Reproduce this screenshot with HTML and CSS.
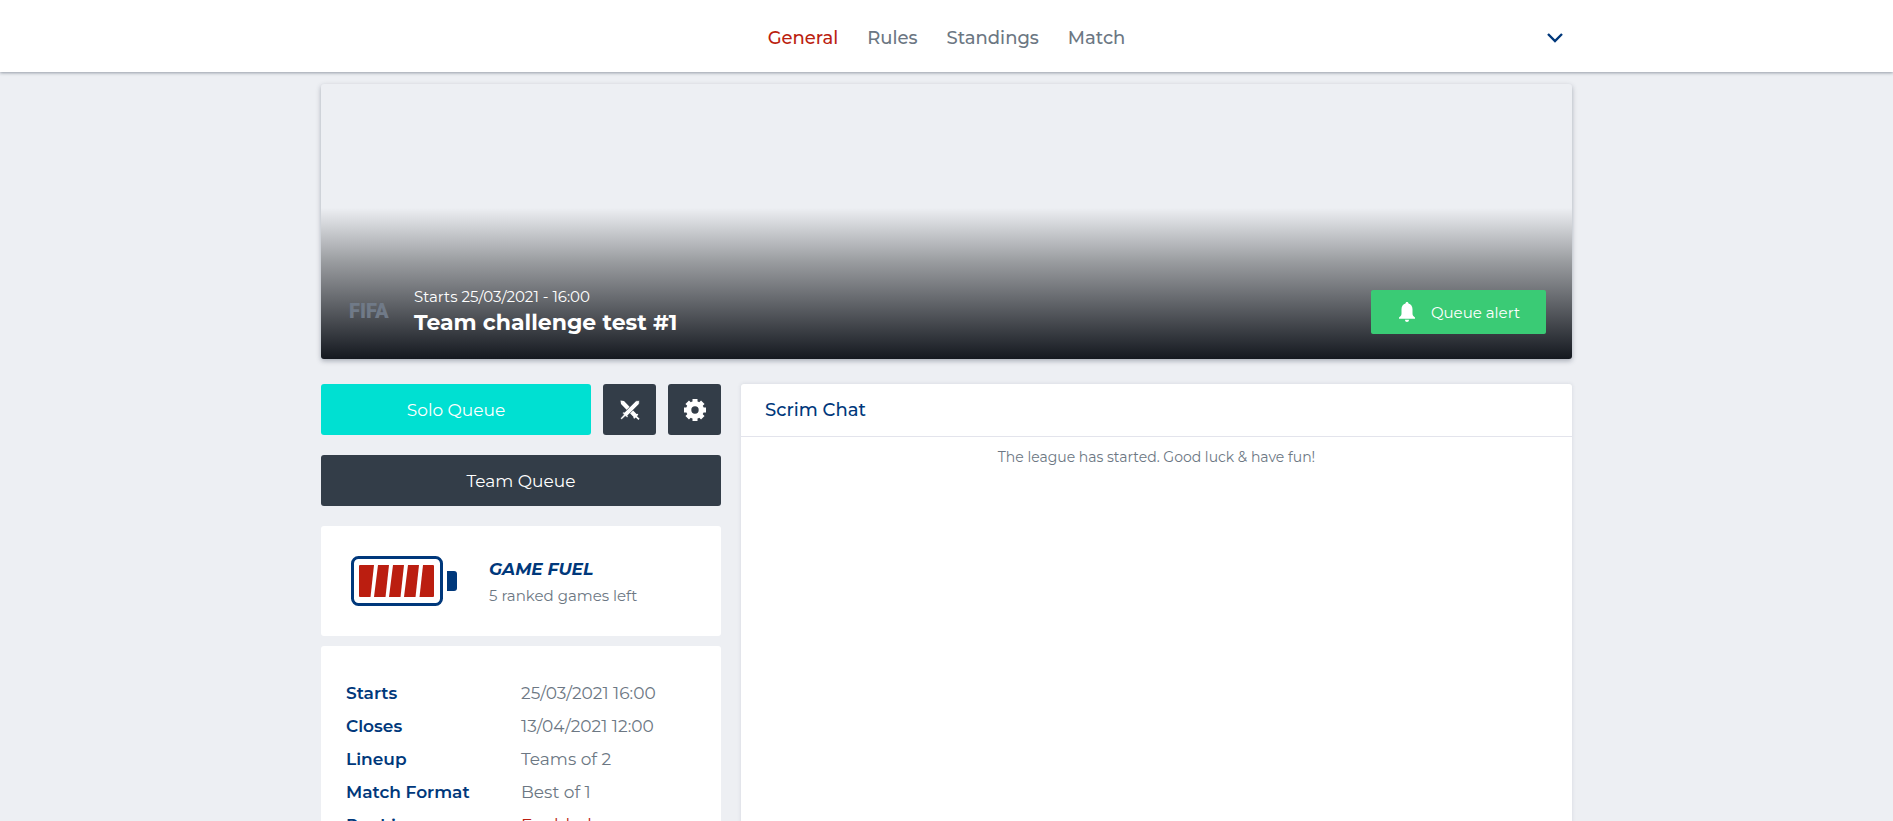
FILE: index.html
```html
<!DOCTYPE html>
<html lang="en">
<head>
<meta charset="utf-8">
<meta name="viewport" content="width=device-width, initial-scale=1">
<title>Team challenge test #1</title>
<link rel="stylesheet" href="styles.css">
</head>
<body>
<header class="topbar">
  <div class="container topbar-inner">
    <nav class="nav" aria-label="League">
      <a class="nav-link nav-link-active" href="#general">General</a>
      <a class="nav-link" href="#rules">Rules</a>
      <a class="nav-link" href="#standings">Standings</a>
      <a class="nav-link" href="#match">Match</a>
    </nav>
    <button class="menu-toggle" type="button" aria-label="Open menu">
      <svg width="16" height="10" viewBox="0 0 16 10" aria-hidden="true"><path d="M1 1 8 8l7-7" fill="none" stroke="currentColor" stroke-width="2.400"/></svg>
    </button>
  </div>
</header>

<main class="container">
  <section class="banner">
    <div class="banner-info">
      <span class="game-logo">FIFA</span>
      <div class="banner-text">
        <p class="banner-date">Starts 25/03/2021 - 16:00</p>
        <h1 class="banner-title">Team challenge test #1</h1>
      </div>
      <button class="alert-button" type="button">
        <svg width="16" height="20" viewBox="0 0 16 20" fill="currentColor" aria-hidden="true"><path d="M8 0c.9 0 1.500.6 1.500 1.500 2.500.7 4 2.800 4 5.800v4.200c0 1.600.8 2.800 2.500 3.900v1.400H0v-1.400c1.700-1.100 2.500-2.300 2.500-3.900V7.300c0-3 1.500-5.100 4-5.800C6.500.6 7.100 0 8 0zM6 17.700h4C10 19 9.100 20 8 20s-2-1-2-2.300z"/></svg>
        Queue alert
      </button>
    </div>
  </section>

  <div class="columns">
    <aside class="side">
      <div class="queue-row">
        <button class="button button-solo" type="button">Solo Queue</button>
        <button class="button button-icon" type="button" aria-label="Challenge">
          <svg width="20" height="20" viewBox="0 0 20 20" aria-hidden="true">
            <path d="M.5.5 4 1 16.500 14l.9-.3.900.9-1.300 1.600 2.600 2.600-1.200 1.200-2.600-2.600-1.600 1.300-.9-.9.300-.9L1 4z" fill="currentColor"/>
            <path d="M19.500.5 16 .8 4.500 12.300l-1-.4-1 1 1.200 1.800L.4 18.200l1.400 1.400 3.500-3.300 1.800 1.200 1-1-.4-1L19.200 4z" fill="currentColor" stroke="#333d48" stroke-width=".7"/>
          </svg>
        </button>
        <button class="button button-icon" type="button" aria-label="Settings">
          <svg width="22" height="22" viewBox="0 0 22 22" aria-hidden="true">
            <circle cx="11" cy="11" r="6.300" fill="none" stroke="currentColor" stroke-width="5.200"/>
            <path d="M11 0v4M11 18v4M0 11h4M18 11h4M3.200 3.200 6 6M16 16l2.800 2.800M18.800 3.200 16 6M6 16l-2.800 2.800" stroke="currentColor" stroke-width="5"/>
          </svg>
        </button>
      </div>
      <button class="button button-team" type="button">Team Queue</button>

      <section class="card fuel">
        <svg width="106" height="50" viewBox="0 0 106 50" aria-hidden="true">
          <rect x="1.500" y="1.500" width="89" height="47" rx="6" fill="none" stroke="#00387b" stroke-width="3"/>
          <path d="M96 15h7a3 3 0 0 1 3 3v14a3 3 0 0 1-3 3h-7z" fill="#00387b"/>
          <g fill="#bb1e10">
            <path d="M9 9h14l-3.500 32H9a1 1 0 0 1-1-1V10a1 1 0 0 1 1-1z"/>
            <path d="M27 9h11l-3.500 32h-11.500z"/>
            <path d="M42 9h11l-3.500 32h-11.500z"/>
            <path d="M57 9h11l-3.500 32h-11.500z"/>
            <path d="M72 9h10a1 1 0 0 1 1 1v30a1 1 0 0 1-1 1H68.500z"/>
          </g>
        </svg>
        <div>
          <h2 class="fuel-title">GAME FUEL</h2>
          <p class="fuel-text">5 ranked games left</p>
        </div>
      </section>

      <dl class="card details">
        <dt>Starts</dt><dd>25/03/2021 16:00</dd>
        <dt>Closes</dt><dd>13/04/2021 12:00</dd>
        <dt>Lineup</dt><dd>Teams of 2</dd>
        <dt>Match Format</dt><dd>Best of 1</dd>
        <dt>Ranking</dt><dd class="enabled">Enabled</dd>
      </dl>
    </aside>

    <section class="card chat">
      <h2 class="chat-title">Scrim Chat</h2>
      <p class="chat-message">The league has started. Good luck &amp; have fun!</p>
    </section>
  </div>
</main>
</body>
</html>
```
FILE: styles.css
```css
* {
  box-sizing: border-box;
}

body {
  margin: 0;
  height: 100vh;
  overflow: hidden;
  background: #edeff3;
  color: #6c7783;
  font-family: Montserrat, Inter, "Open Sans", sans-serif;
  font-size: 17px;
  line-height: 21px;
}

h1,
h2,
p,
dl,
dd {
  margin: 0;
}

button {
  border: 0;
  padding: 0;
  font: inherit;
  cursor: pointer;
}

svg {
  display: block;
  flex: none;
}

.container {
  width: 100%;
  max-width: 1251px;
  margin: 0 auto;
}

.topbar {
  background: #fff;
  box-shadow: 0 1px 3px rgba(40, 55, 70, 0.45);
}

.topbar-inner {
  display: grid;
  grid-template-columns: 1fr auto 1fr;
  align-items: center;
  min-height: 72px;
  padding-top: 4px;
}

.nav {
  display: flex;
  grid-column: 2;
  gap: 29px;
}

.nav-link {
  color: #6c7783;
  font-size: 18px;
  font-weight: 500;
  text-decoration: none;
}

.nav-link-active {
  color: #bb1e10;
}

.menu-toggle {
  justify-self: end;
  margin-right: 9px;
  background: none;
  color: #00387b;
}

.banner {
  display: flex;
  flex-direction: column;
  justify-content: flex-end;
  min-height: 275px;
  margin-top: 12px;
  border-radius: 3px;
  background: linear-gradient(to bottom, rgba(0, 0, 0, 0) 45%, rgba(2, 5, 8, 0.36) 65%, #14181f 100%), #edeff3;
  box-shadow: 0 2px 5px rgba(40, 50, 70, 0.35);
}

.banner-info {
  display: flex;
  align-items: center;
  padding: 0 26px 20px 28px;
}

.game-logo {
  width: 65px;
  color: #707a88;
  font-family: Roboto, sans-serif;
  font-size: 20px;
  font-weight: 900;
}

.banner-text {
  flex: 1;
  padding-top: 2px;
  color: #fff;
}

.banner-date {
  font-size: 15px;
}

.banner-title {
  font-size: 22px;
  font-weight: 700;
  line-height: 32px;
}

.alert-button {
  display: flex;
  align-items: center;
  gap: 16px;
  padding: 12px 26px 11px 28px;
  border-radius: 2px;
  background: #3acb75;
  color: #fff;
  font-size: 15px;
}

.columns {
  display: grid;
  grid-template-columns: 400px 1fr;
  gap: 20px;
  margin-top: 25px;
}

.queue-row {
  display: grid;
  grid-template-columns: 1fr 53px 53px;
  gap: 12px;
}

.button {
  padding: 16px 0 14px;
  border-radius: 3px;
  background: #333d48;
  color: #fff;
}

.button-solo {
  background: #00e0d2;
}

.button-icon {
  display: grid;
  place-items: center;
  padding: 0;
}

.button-team {
  width: 100%;
  margin-top: 20px;
}

.card {
  border-radius: 3px;
  background: #fff;
}

.fuel {
  display: flex;
  align-items: center;
  gap: 32px;
  margin-top: 20px;
  padding: 30px;
}

.fuel-title {
  color: #00387b;
  font-size: 17px;
  font-style: italic;
  font-weight: 700;
  line-height: 24px;
}

.fuel-text {
  padding-top: 4px;
  font-size: 15px;
}

.details {
  display: grid;
  grid-template-columns: 175px 1fr;
  margin-top: 10px;
  padding: 31px 25px;
  line-height: 33px;
}

.details dt {
  color: #00387b;
  font-weight: 600;
}

.details .enabled {
  color: #bb1e10;
}

.chat {
  box-shadow: 0 0 4px rgba(40, 50, 80, 0.12);
}

.chat-title {
  padding: 16px 24px 15px;
  border-bottom: 1px solid #e3e4ec;
  color: #00387b;
  font-size: 18px;
  font-weight: 500;
}

.chat-message {
  padding: 10px;
  font-size: 14px;
  text-align: center;
}
```
